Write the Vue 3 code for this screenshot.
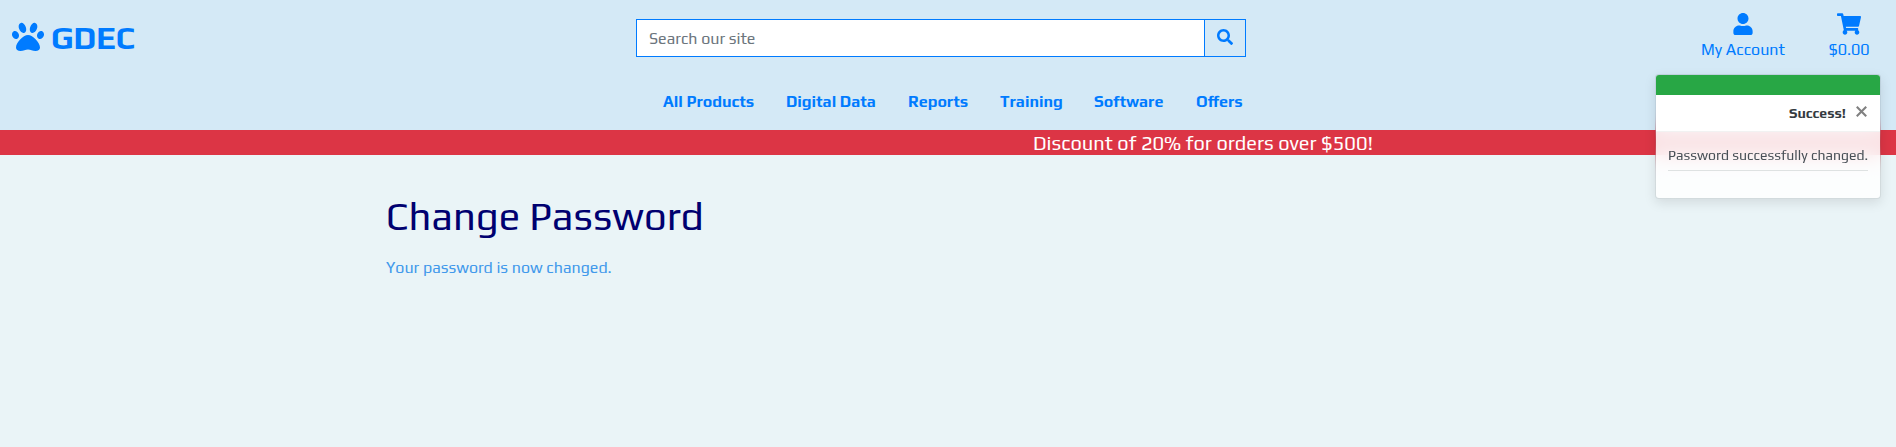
<script setup>
const links = [
  { label: 'All Products', cls: 'products' },
  { label: 'Digital Data', cls: 'data' },
  { label: 'Reports', cls: 'reports' },
  { label: 'Training', cls: 'training' },
  { label: 'Software', cls: 'software' },
  { label: 'Offers', cls: 'offers' }
]
</script>

<template>
  <div class="page">
    <header>
      <div class="top">
        <a class="brand">
          <svg class="paw" viewBox="0 0 512 512"><path d="M256 224c-79.410 0-192 122.760-192 200.250 0 34.900 26.810 55.750 71.740 55.750 48.840 0 81.090-25.080 120.260-25.080 39.510 0 71.850 25.080 120.260 25.080 44.930 0 71.740-20.850 71.740-55.750C448 346.760 335.410 224 256 224zm-147.280-12.610c-10.400-34.650-42.440-57.090-71.560-50.130-29.120 6.960-44.290 40.690-33.890 75.340 10.400 34.650 42.440 57.090 71.560 50.130 29.120-6.960 44.290-40.690 33.890-75.340zm84.720-20.780c30.940-8.140 42.940-50.460 26.800-94.520s-48.870-73.180-79.810-65.040-42.940 50.460-26.800 94.520 48.870 73.180 79.810 65.040zm281.400-29.340c-29.120-6.960-61.150 15.480-71.560 50.130-10.400 34.650 4.770 68.380 33.890 75.340 29.120 6.960 61.150-15.480 71.560-50.130 10.400-34.650-4.770-68.380-33.890-75.340zm-156.270 29.340c30.940 8.140 63.670-20.970 79.810-65.040 16.140-44.060 4.140-86.380-26.800-94.520s-63.670 20.970-79.810 65.040-4.140 86.380 26.800 94.520z" /></svg>
          <span>GDEC</span>
        </a>
        <div class="search">
          <input type="text" placeholder="Search our site" />
          <button aria-label="Search"><svg viewBox="0 0 512 512"><path d="M505 442.700L405.300 343c-4.500-4.500-10.600-7-17-7H372c27.600-35.300 44-79.700 44-128C416 93.100 322.900 0 208 0S0 93.100 0 208s93.100 208 208 208c48.300 0 92.700-16.400 128-44v16.300c0 6.400 2.500 12.500 7 17l99.700 99.700c9.400 9.400 24.600 9.400 33.900 0l28.300-28.300c9.400-9.400 9.400-24.600.1-34zM208 336c-70.700 0-128-57.200-128-128 0-70.700 57.200-128 128-128 70.700 0 128 57.200 128 128 0 70.700-57.200 128-128 128z" /></svg></button>
        </div>
        <div class="tools">
          <a class="tool account"><svg width="20" height="22" viewBox="0 0 448 512"><path d="M224 256c70.700 0 128-57.300 128-128S294.700 0 224 0 96 57.300 96 128s57.300 128 128 128zm89.600 32h-16.700c-22.200 10.200-46.900 16-72.900 16s-50.600-5.800-72.900-16h-16.700C60.200 288 0 348.200 0 422.400V464c0 26.500 21.500 48 48 48h352c26.500 0 48-21.500 48-48v-41.600c0-74.200-60.200-134.400-134.400-134.400z" /></svg><span>My Account</span></a>
          <a class="tool cart"><svg width="24" height="22" viewBox="0 0 576 512"><path d="M528.120 301.319l47.273-208C578.806 78.301 567.391 64 551.990 64H159.208l-9.166-44.810C147.758 8.021 137.930 0 126.529 0H24C10.745 0 0 10.745 0 24v16c0 13.255 10.745 24 24 24h69.883l70.248 343.435C147.325 417.100 136 435.222 136 456c0 30.928 25.072 56 56 56s56-25.072 56-56c0-15.674-6.447-29.835-16.824-40h209.647C430.447 426.165 424 440.326 424 456c0 30.928 25.072 56 56 56s56-25.072 56-56c0-22.172-12.888-41.332-31.579-50.405l5.517-24.276c3.413-15.018-8.002-29.319-23.403-29.319H218.117l-6.545-32h293.145c11.206 0 20.920-7.754 23.403-18.681z" /></svg><span>$0.00</span></a>
        </div>
      </div>
      <nav><a v-for="l in links" :key="l.label" :class="l.cls">{{ l.label }}</a></nav>
    </header>
    <div class="banner"><span>Discount of 20% for orders over $500!</span></div>
    <main>
      <h1>Change Password</h1>
      <p>Your password is now changed.</p>
    </main>
    <aside class="toast">
      <div class="strip"></div>
      <div class="toast-head"><strong>Success!</strong><svg viewBox="0 0 10 10"><path d="M.7.7l8.600 8.600M9.300.7L.7 9.300" /></svg></div>
      <div class="toast-body"><div class="message">Password successfully changed.</div></div>
    </aside>
  </div>
</template>

<style>
body { margin: 0; overflow: hidden; }
</style>

<style scoped>
* { box-sizing: border-box; }
.page {
  position: relative;
  height: 447px;
  background: #eaf4f7;
  font: 16px/24px Play, Inter, "Liberation Sans", sans-serif;
  color: #007bff;
  white-space: nowrap;
}
header { height: 130px; background: #d4e9f6; }
.top { height: 84px; display: grid; grid-template-columns: 636px 610px 1fr; }
.brand { display: flex; padding: 21px 0 0 12px; }
.paw { width: 32px; height: 32px; fill: currentColor; margin-right: 7px; }
.brand span { font-size: 32px; font-weight: 700; line-height: 34px; }
.search { display: flex; height: 38px; margin-top: 19px; border: 1px solid #007bff; }
.search input {
  flex: 1;
  min-width: 0;
  border: 0;
  border-right: 1px solid #007bff;
  padding: 2px 12px 0;
  font: inherit;
  outline: 0;
  background: #fff;
}
.search input::placeholder { color: #6c757d; opacity: 1; }
.search button { width: 40px; border: 0; padding: 0 0 2px; background: none; display: flex; align-items: center; justify-content: center; }
.search button svg { width: 16px; height: 16px; fill: #007bff; }
.tools { display: flex; padding: 13px 0 0 455px; }
.tool { display: flex; flex-direction: column; align-items: center; }
.tool svg { fill: currentColor; }
.tool span { margin-top: 3px; }
.account { width: 84px; margin-right: 43px; }
.cart { width: 42px; }
nav { display: flex; padding: 6px 0 0 663px; font-weight: 700; }
nav a { margin-right: 32px; }
.products { width: 91px; }
.data { width: 90px; }
.reports { width: 60px; }
.training { width: 62px; }
.software { width: 70px; }
.offers { width: 47px; }
.banner { height: 25px; padding-left: 1033px; background: #dc3545; color: #fff; font-size: 20px; line-height: 25px; }
main { padding: 37px 0 0 386px; }
h1 { margin: 0; font-size: 40px; line-height: 48px; font-weight: 400; color: #000070; }
p { margin: 16px 0 0; color: #4299eb; }
.toast {
  position: absolute;
  left: 1655px;
  top: 74px;
  width: 226px;
  height: 125px;
  border: 1px solid rgba(0, 0, 0, .1);
  border-radius: 4px;
  background: rgba(255, 255, 255, .85);
  background-clip: padding-box;
  box-shadow: 0 4px 12px rgba(0, 0, 0, .1);
  backdrop-filter: blur(10px);
  overflow: hidden;
  font-size: 14px;
}
.strip { height: 20px; background: #28a745; }
.toast-head { height: 37px; display: flex; justify-content: flex-end; padding: 6px 13px 0 0; background: #fff; border-bottom: 1px solid rgba(0, 0, 0, .05); color: #343a40; }
.toast-head svg { width: 11px; height: 11px; margin: 5px 0 0 10px; fill: none; stroke: #808080; stroke-width: 1.900; }
.toast-body { padding: 12px; color: #495057; }
.message { height: 27px; line-height: 23px; border-bottom: 1px solid #dee2e2; }
</style>
